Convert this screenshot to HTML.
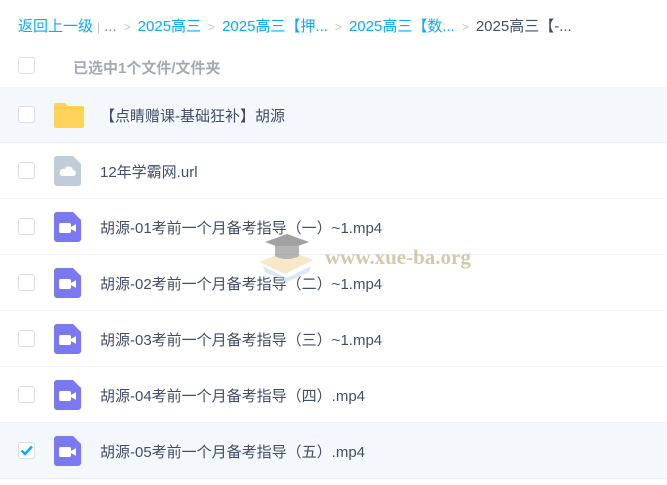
<!DOCTYPE html><html><head><meta charset="utf-8"><style>
body{margin:0;width:667px;height:485px;background:#fff;font-family:"Liberation Sans","Noto Sans CJK SC",sans-serif;overflow:hidden;position:relative}
.bc{position:absolute;top:15px;left:18px;font-size:15px;color:#09aaff;white-space:nowrap}
.bc .g{color:#c0c4cc;margin:0 7px;font-size:12px}
.bc .d{color:#888}
.bc .l{color:#424e67}
.row{position:absolute;left:0;width:667px;border-bottom:1px solid #f0f2f5}
.cb{position:absolute;left:18px;width:15px;height:15px;border:1px solid #dcdfe6;border-radius:3px;background:#fff}
.t{position:absolute;left:100px;font-size:15px;color:#424e67}
.ic{position:absolute;left:54px}
</style></head><body>
<div class="bc">返回上一级<span class="g" style="margin:0 4px">|</span><span class="d">...</span><span class="g">&gt;</span>2025高三<span class="g">&gt;</span>2025高三【押...<span class="g">&gt;</span>2025高三【数...<span class="g">&gt;</span><span class="l">2025高三【-...</span></div>
<div class="row" style="top:45px;height:42px;border-bottom-color:#e8ecf2"><div class="cb" style="top:12px"></div><div class="t" style="left:73px;top:12px;color:#a3a9b5;font-weight:bold">已选中1个文件/文件夹</div></div>
<div class="row" style="top:87px;height:55px;background:#f4f8fc;border-bottom-color:#e6ebf1"><div class="cb" style="top:19px"></div>
<svg class="ic" style="top:14px" width="30" height="27"><path d="M2 2h9l3 3h14a2 2 0 0 1 2 2v18a2 2 0 0 1-2 2H2a2 2 0 0 1-2-2V4a2 2 0 0 1 2-2z" fill="#fdd459"/><path d="M0 7h30" stroke="#f5c53a" stroke-width="1"/></svg>
<div class="t" style="top:18px">【点睛赠课-基础狂补】胡源</div></div>
<div class="row" style="top:143px;height:55px"><div class="cb" style="top:19px"></div>
<svg class="ic" style="top:13px" width="27" height="30"><path d="M3 0h16l8 8v19a3 3 0 0 1-3 3H3a3 3 0 0 1-3-3V3a3 3 0 0 1 3-3z" fill="#c0ccd8"/><path d="M8 20h11a3 3 0 0 0 0-6a4.5 4.5 0 0 0-8.5-1a3.5 3.5 0 0 0-2.5 7z" fill="#fff"/></svg>
<div class="t" style="top:18px">12年学霸网.url</div></div>
<div class="row" style="top:199px;height:55px"><div class="cb" style="top:19px"></div><svg class="ic" style="top:13px" width="27" height="30"><path d="M3 0h16l8 8v19a3 3 0 0 1-3 3H3a3 3 0 0 1-3-3V3a3 3 0 0 1 3-3z" fill="#7b79ef"/><rect x="5" y="11" width="12" height="10" rx="2" fill="#fff"/><path d="M17 15l5-3v8l-5-3z" fill="#fff"/></svg><div class="t" style="top:18px">胡源-01考前一个月备考指导（一）~1.mp4</div></div>
<div class="row" style="top:255px;height:55px"><div class="cb" style="top:19px"></div><svg class="ic" style="top:13px" width="27" height="30"><path d="M3 0h16l8 8v19a3 3 0 0 1-3 3H3a3 3 0 0 1-3-3V3a3 3 0 0 1 3-3z" fill="#7b79ef"/><rect x="5" y="11" width="12" height="10" rx="2" fill="#fff"/><path d="M17 15l5-3v8l-5-3z" fill="#fff"/></svg><div class="t" style="top:18px">胡源-02考前一个月备考指导（二）~1.mp4</div></div>
<div class="row" style="top:311px;height:55px"><div class="cb" style="top:19px"></div><svg class="ic" style="top:13px" width="27" height="30"><path d="M3 0h16l8 8v19a3 3 0 0 1-3 3H3a3 3 0 0 1-3-3V3a3 3 0 0 1 3-3z" fill="#7b79ef"/><rect x="5" y="11" width="12" height="10" rx="2" fill="#fff"/><path d="M17 15l5-3v8l-5-3z" fill="#fff"/></svg><div class="t" style="top:18px">胡源-03考前一个月备考指导（三）~1.mp4</div></div>
<div class="row" style="top:367px;height:55px"><div class="cb" style="top:19px"></div><svg class="ic" style="top:13px" width="27" height="30"><path d="M3 0h16l8 8v19a3 3 0 0 1-3 3H3a3 3 0 0 1-3-3V3a3 3 0 0 1 3-3z" fill="#7b79ef"/><rect x="5" y="11" width="12" height="10" rx="2" fill="#fff"/><path d="M17 15l5-3v8l-5-3z" fill="#fff"/></svg><div class="t" style="top:18px">胡源-04考前一个月备考指导（四）.mp4</div></div>
<div class="row" style="top:423px;height:55px;background:#f4f8fc;border-bottom-color:#e6ebf1"><div class="cb" style="top:19px"><svg width="15" height="15" style="position:absolute;left:0;top:0"><path d="M2.5 7.5l3.5 3.5l7-7.5" stroke="#09aaff" stroke-width="2.4" fill="none"/></svg></div><svg class="ic" style="top:13px" width="27" height="30"><path d="M3 0h16l8 8v19a3 3 0 0 1-3 3H3a3 3 0 0 1-3-3V3a3 3 0 0 1 3-3z" fill="#7b79ef"/><rect x="5" y="11" width="12" height="10" rx="2" fill="#fff"/><path d="M17 15l5-3v8l-5-3z" fill="#fff"/></svg><div class="t" style="top:18px">胡源-05考前一个月备考指导（五）.mp4</div></div>
<svg style="position:absolute;left:257px;top:230px;opacity:.55" width="60" height="55"><path d="M2 32l30-12l24 10l-28 14z" fill="#f2d79a"/><path d="M6 36l24 12l24-12l-2 6l-22 10l-22-10z" fill="#bcd6ea"/><path d="M8 12l22-8l22 8l-22 8z" fill="#555"/><path d="M18 16v10c6 4 18 4 24 0v-10" fill="#777"/></svg>
<div style="position:absolute;left:325px;top:245px;font-family:'Liberation Serif',serif;font-weight:bold;font-size:21px;color:#c9b48f;opacity:.75">www.xue-ba.org</div>
</body></html>
